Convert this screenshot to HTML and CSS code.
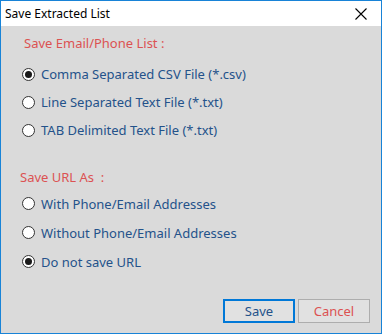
FILE: index.html
```html
<!DOCTYPE html>
<html>
<head>
    <meta charset="utf-8">
    <title>Save Extracted List</title>
<link rel="stylesheet" href="styles.css">
</head>
<body>
<div class="window">
    <div class="titlebar">
        <span class="title">Save Extracted List</span>
        <svg class="close" width="12" height="12" viewBox="0 0 12 12">
            <path d="M0.5 0.5 L11.5 11.5 M11.5 0.5 L0.5 11.5" stroke="#000" stroke-width="1.1" fill="none"/>
        </svg>
    </div>
    <div class="content">
        <div class="heading">Save Email/Phone List :</div>
        <div class="group first">
            <div class="option"><span class="radio checked"></span>Comma Separated CSV File (*.csv)</div>
            <div class="option"><span class="radio"></span>Line Separated Text File (*.txt)</div>
            <div class="option"><span class="radio"></span>TAB Delimited Text File (*.txt)</div>
        </div>
        <div class="heading second">Save URL As &nbsp;:</div>
        <div class="group urls">
            <div class="option"><span class="radio"></span>With Phone/Email Addresses</div>
            <div class="option"><span class="radio"></span>Without Phone/Email Addresses</div>
            <div class="option"><span class="radio checked"></span>Do not save URL</div>
        </div>
        <div class="buttons">
            <button class="btn save">Save</button>
            <button class="btn cancel">Cancel</button>
        </div>
    </div>
</div>
</body>
</html>
```

FILE: styles.css
```css
*
{
  margin: 0;
  padding: 0;
  box-sizing: border-box;
}

body
{
  font-family: 'Noto Sans', 'Open Sans', sans-serif;
  background: #dadada;
}

div.window
{
  width: 382px;
  height: 334px;
  border: 1px solid #1883d7;
  background: #dadada;
  display: flex;
  flex-direction: column;
}

div.titlebar
{
  height: 25px;
  background: #fff;
  display: flex;
  align-items: center;
  justify-content: space-between;
  padding-left: 4px;
  padding-right: 14px;
}

span.title
{
  font-size: 12px;
  color: #000;
}

div.content
{
  flex: 1;
  padding-left: 21px;
  padding-right: 11px;
  display: flex;
  flex-direction: column;
}

div.heading
{
  color: #dc5252;
  font-size: 13px;
  margin-top: 8px;
  margin-left: 2px;
  height: 18px;
  line-height: 18px;
}

div.heading.second
{
  margin-top: 24px;
  margin-left: -2px;
}

div.group
{
  margin-top: 8px;
}

div.group.urls
{
  margin-top: 3px;
}

div.option
{
  display: flex;
  align-items: center;
  height: 28px;
  font-size: 13px;
  color: #24528a;
}

div.urls div.option
{
  height: 29px;
}

span.radio
{
  width: 13px;
  height: 13px;
  border: 1px solid #333;
  border-radius: 50%;
  background: #fff;
  margin-right: 6px;
  display: flex;
  align-items: center;
  justify-content: center;
}

span.radio.checked::after
{
  content: "";
  width: 7px;
  height: 7px;
  border-radius: 50%;
  background: #1a1a1a;
}

div.buttons
{
  margin-top: auto;
  margin-bottom: 10px;
  display: flex;
  justify-content: flex-end;
  gap: 3px;
}

button.btn
{
  width: 72px;
  height: 24px;
  font-family: 'Noto Sans', 'Open Sans', sans-serif;
  font-size: 13px;
  background: #e1e1e1;
  border: 1px solid #adadad;
}

button.save
{
  border: 2px solid #0078d7;
  color: #24528a;
}

button.cancel
{
  color: #dc5252;
}
```
